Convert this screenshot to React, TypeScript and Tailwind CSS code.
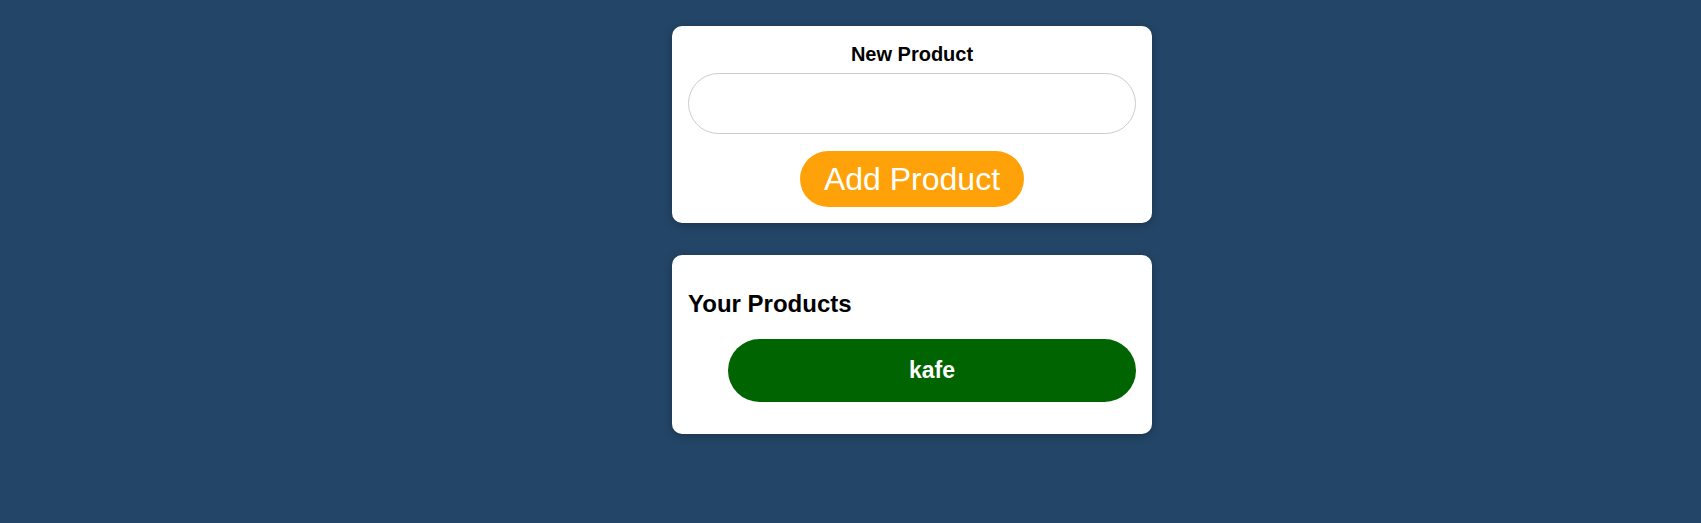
import React, { useState } from 'react';

export default function App() {
  const [name, setName] = useState('');
  const products = ['kafe'];

  return (
    <div className="min-h-[523px] w-full bg-[#234567] font-['Liberation_Sans',Arial,sans-serif] text-black">
      <div className="flex flex-col items-center pl-[123px] pt-[26px]">
        {/* new product form */}
        <div className="w-[480px] rounded-[10px] bg-white px-4 pt-[17px] pb-[16px] shadow-[0_2px_8px_rgba(0,0,0,0.25)]">
          <h3 className="text-center text-[20px] font-bold leading-[23px]">New Product</h3>
          <input
            value={name}
            onChange={(e) => setName(e.target.value)}
            className="mt-[7px] block h-[61px] w-full rounded-full border border-[#cccccc] bg-white px-4 text-[20px] outline-none"
          />
          <div className="mt-[17px] flex justify-center">
            <button className="h-[56px] rounded-full bg-[#ffa209] px-6 text-[32px] leading-[36px] text-white">
              Add Product
            </button>
          </div>
        </div>

        {/* product list */}
        <div className="mt-[32px] w-[480px] rounded-[10px] bg-white px-4 pt-[35px] pb-8 shadow-[0_2px_8px_rgba(0,0,0,0.25)]">
          <h2 className="text-[24px] font-bold leading-[28px]">Your Products</h2>
          <ul className="mt-[21px] pl-10">
            {products.map((p) => (
              <li
                key={p}
                className="flex h-[63px] items-center justify-center rounded-full bg-[#006400] text-[23px] font-bold text-white"
              >
                {p}
              </li>
            ))}
          </ul>
        </div>
      </div>
    </div>
  );
}
